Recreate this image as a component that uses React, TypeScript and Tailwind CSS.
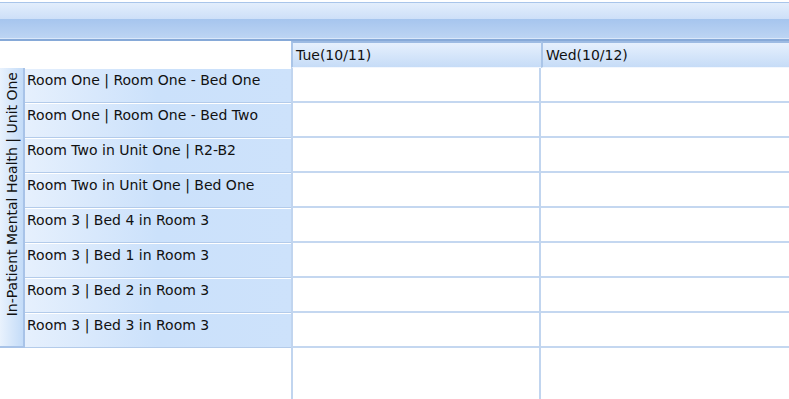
import React from 'react';

const rooms = [
  'Room One | Room One - Bed One',
  'Room One | Room One - Bed Two',
  'Room Two in Unit One | R2-B2',
  'Room Two in Unit One | Bed One',
  'Room 3 | Bed 4 in Room 3',
  'Room 3 | Bed 1 in Room 3',
  'Room 3 | Bed 2 in Room 3',
  'Room 3 | Bed 3 in Room 3',
];

const days = ['Tue(10/11)', 'Wed(10/12)'];

export default function App() {
  return (
    <div className="w-[789px] h-[399px] overflow-hidden bg-white text-[14px] text-[#111] font-['DejaVu_Sans',Verdana,sans-serif]">
      {/* toolbar */}
      <div className="h-[41px] pt-[2px] bg-white">
        <div className="h-[39px] border-t border-[#a9c5ea] border-b-2 border-b-[#86a9d8] flex flex-col">
          <div className="h-[16px] bg-gradient-to-b from-[#e3eefc] to-[#cddff8]" />
          <div className="flex-1 bg-gradient-to-b from-[#a6c5ee] to-[#bcd4f3] border-b border-[#d9e7fa]" />
        </div>
      </div>

      {/* header row */}
      <div className="flex h-[27px]">
        <div className="w-[291px] bg-white" />
        {days.map((d, i) => (
          <div
            key={d}
            className={`${i === 0 ? 'w-[250px]' : 'flex-1'} border-l-2 border-[#aac5e8] border-t-2 border-t-[#9dbbe3] border-b border-b-[#f2f7fe] bg-gradient-to-b from-[#e6f0fd] to-[#c6dcf7] pl-[3px] pt-[4px] leading-[16px]`}
          >
            {d}
          </div>
        ))}
      </div>

      {/* body */}
      <div className="flex">
        <div className="w-[25px] h-[280px] flex flex-col items-center pt-[4px] bg-gradient-to-r from-[#e9f2fd] to-[#c4dcf8] border-r-2 border-[#a8c3e8] border-b-2 border-b-[#a8c3e8]">
          <span className="[writing-mode:vertical-rl] rotate-180 leading-[14px] whitespace-nowrap">
            In-Patient Mental Health | Unit One
          </span>
        </div>
        <div className="w-[266px] flex flex-col">
          {rooms.map((r) => (
            <div
              key={r}
              className="h-[35px] border-t border-white border-b border-b-[#b3cbea] bg-gradient-to-r from-[#e6f0fd] via-[#cbe1fb] to-[#cde2fb] pl-[2px] pt-[3px] leading-[17px] whitespace-nowrap"
            >
              {r}
            </div>
          ))}
        </div>
        {days.map((d, i) => (
          <div key={d} className={`${i === 0 ? 'w-[250px] border-x-2' : 'flex-1'} border-[#c1d5ef] flex flex-col`}>
            {rooms.map((r) => (
              <div key={r} className="h-[35px] border-b-2 border-[#c4d7f0]" />
            ))}
            <div className="h-[60px]" />
          </div>
        ))}
      </div>
    </div>
  );
}
